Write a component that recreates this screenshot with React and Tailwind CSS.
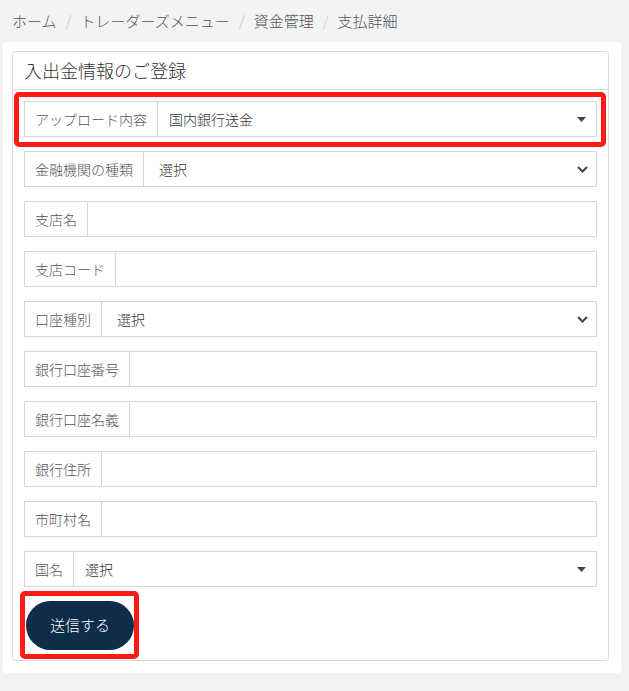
const FONT = "font-['Noto_Sans_CJK_JP','Noto_Sans',sans-serif]"

function Caret() {
  return (
    <svg width="9" height="5" viewBox="0 0 9 5" className="shrink-0">
      <path d="M0 0h9L4.5 5z" fill="#444" />
    </svg>
  )
}

function Chevron() {
  return (
    <svg width="11" height="7" viewBox="0 0 11 7" className="shrink-0">
      <path d="M1 1l4.5 4.5L10 1" fill="none" stroke="#444" strokeWidth="2" />
    </svg>
  )
}

function Field({ label, value, kind, highlight }) {
  const pad = kind === 'native' ? 'pl-[15px] pr-[8px]' : 'pl-[11px] pr-[10px]'
  return (
    <div className="relative">
      {highlight && (
        <div className="absolute -left-[10px] -right-[9px] -top-[9px] -bottom-[10px] rounded-[5px] border-[5px] border-[#ff1a14]" />
      )}
      <div className="flex h-9 border border-[#d8d8d8] bg-white">
        <div className="flex items-center border-r border-[#d8d8d8] px-[10px] text-[14px] text-[#555] whitespace-nowrap">
          {label}
        </div>
        <div className={`flex flex-1 items-center justify-between ${pad} text-[14px] text-[#333]`}>
          <span>{value}</span>
          {kind === 'caret' && <Caret />}
          {kind === 'native' && <Chevron />}
        </div>
      </div>
    </div>
  )
}

const fields = [
  { label: 'アップロード内容', value: '国内銀行送金', kind: 'caret', highlight: true },
  { label: '金融機関の種類', value: '選択', kind: 'native' },
  { label: '支店名' },
  { label: '支店コード' },
  { label: '口座種別', value: '選択', kind: 'native' },
  { label: '銀行口座番号' },
  { label: '銀行口座名義' },
  { label: '銀行住所' },
  { label: '市町村名' },
  { label: '国名', value: '選択', kind: 'caret' },
]

export default function App() {
  const crumbs = ['ホーム', 'トレーダーズメニュー', '資金管理', '支払詳細']
  return (
    <div className={`${FONT} min-h-[691px] bg-[#f1f3f5] font-light`}>
      <nav className="flex h-[42px] items-center pl-3 text-[15px] text-[#555]">
        {crumbs.map((c, i) => (
          <span key={c} className="flex items-center">
            {i > 0 && <span className="px-[9px] text-[#c8c8c8]">/</span>}
            {c}
          </span>
        ))}
      </nav>

      <div className="ml-[3px] w-[618px] rounded-[3px] bg-white pl-[9px] pr-[12px] pt-[9px] pb-[12px]">
        <div className="rounded-[3px] border border-[#dcdcdc] bg-white">
          <div className="flex h-[38px] items-center border-b border-[#dcdcdc] pl-[11px] text-[18px] text-[#333]">
            入出金情報のご登録
          </div>
          <div className="px-[11px] pt-[11px] pb-[10px]">
            <div className="flex flex-col gap-[14px]">
              {fields.map((f) => (
                <Field key={f.label} {...f} />
              ))}
            </div>
            <div className="relative mt-[14px] ml-[2px] w-[108px]">
              <div className="absolute -left-[6px] -right-[5px] -top-[10px] -bottom-[9px] rounded-[5px] border-[5px] border-[#ff1a14]" />
              <button className="relative flex h-[49px] w-[108px] items-center justify-center rounded-full bg-[#0d2d4b] text-[15px] font-light text-white">
                送信する
              </button>
            </div>
          </div>
        </div>
      </div>
    </div>
  )
}
